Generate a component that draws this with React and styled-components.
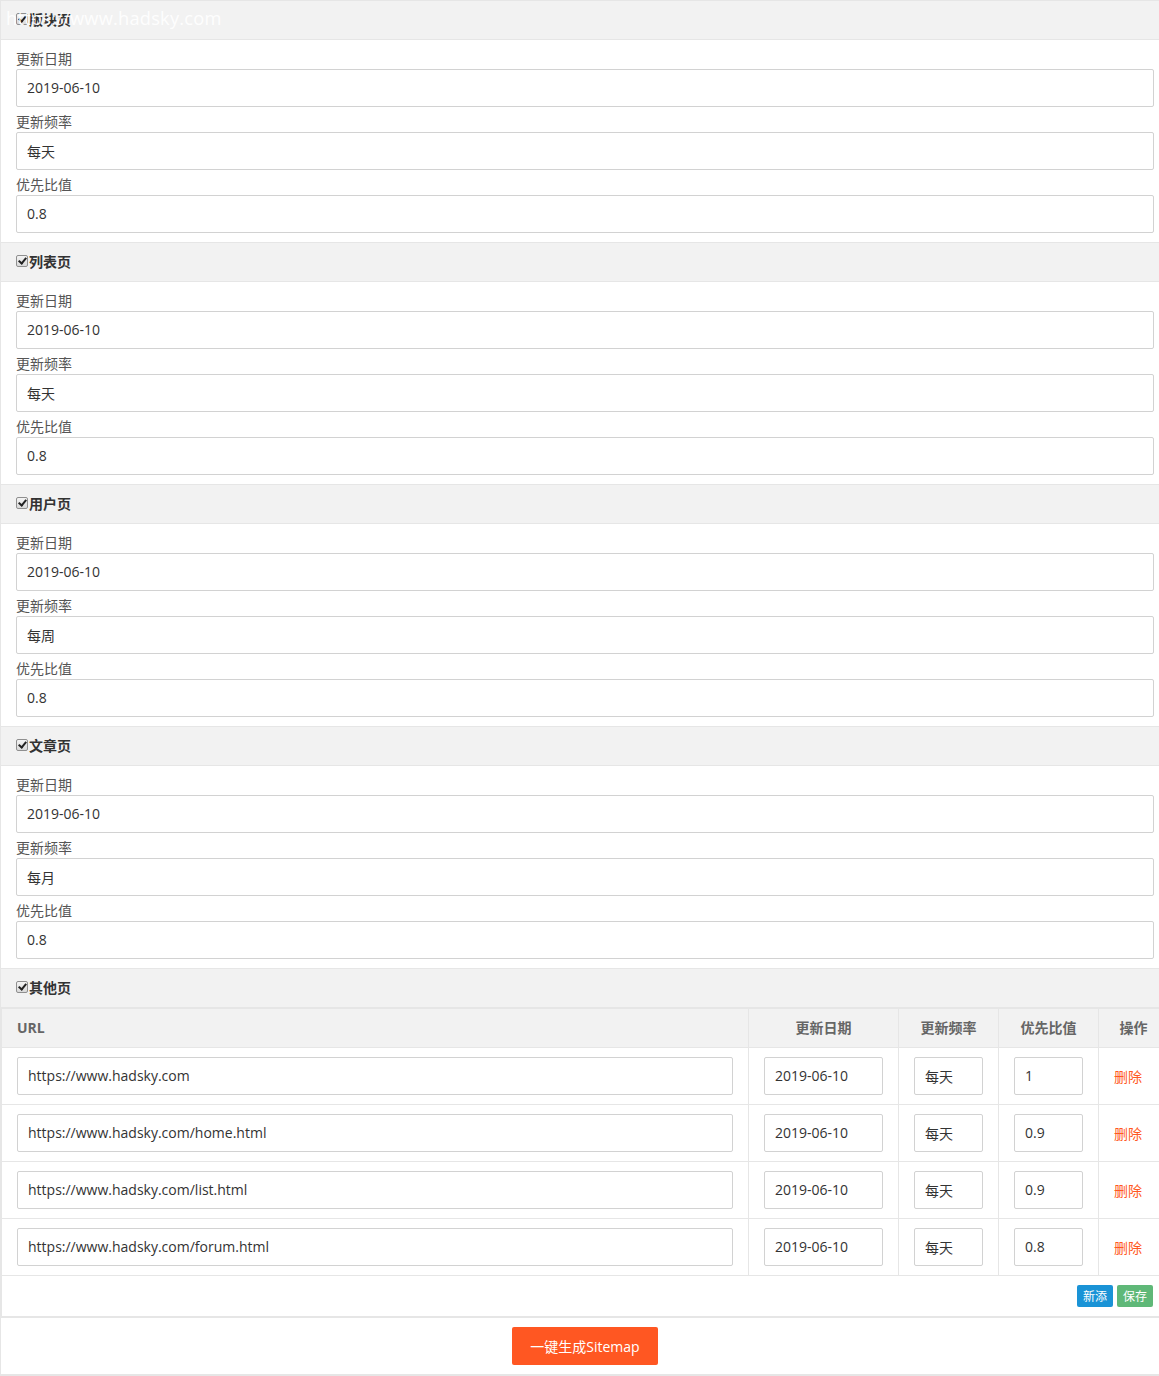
import React from 'react';
import styled, { createGlobalStyle } from 'styled-components';

const GlobalStyle = createGlobalStyle`
  html, body {
    margin: 0;
    padding: 0;
    overflow-x: hidden;
    background: #fff;
  }
  body {
    font-family: "Open Sans", "Noto Sans CJK SC", sans-serif;
    font-size: 14px;
    color: #333;
  }
`;

const Page = styled.div`
  position: relative;
  width: 1170px;
  box-sizing: border-box;
  border-left: 1px solid #e6e6e6;
  border-right: 1px solid #e6e6e6;
`;

const Watermark = styled.div`
  position: absolute;
  left: 5px;
  top: 5px;
  font-size: 18.3px;
  color: rgba(255, 255, 255, 0.92);
  letter-spacing: 0.2px;
  pointer-events: none;
`;

const SectionHead = styled.div`
  display: flex;
  align-items: center;
  box-sizing: border-box;
  height: 40px;
  padding: 0 0 2px 15px;
  background: #f2f2f2;
  border-top: 1px solid #e6e6e6;
  border-bottom: 1px solid #e6e6e6;
  font-weight: bold;
  color: #333;
`;

const Check = styled.input`
  appearance: none;
  -webkit-appearance: none;
  position: relative;
  box-sizing: border-box;
  width: 12px;
  height: 12px;
  margin: 0 1px 1px 0;
  border: 1px solid #8f8f8f;
  border-radius: 2px;
  background: linear-gradient(#f4f4f4, #d9d9d9);
  &::after {
    content: '';
    position: absolute;
    left: 3px;
    top: 0px;
    width: 3px;
    height: 6px;
    border: solid #222;
    border-width: 0 2px 2px 0;
    transform: rotate(40deg);
  }
`;

const SectionBody = styled.div`
  padding: 4px 15px 9px;
`;

const Label = styled.div`
  height: 20px;
  line-height: 19px;
  margin-top: 5px;
  color: #555;
`;

const Input = styled.input`
  display: block;
  box-sizing: border-box;
  width: 100%;
  height: 38px;
  padding: 0 10px 1px;
  border: 1px solid #d2d2d2;
  border-radius: 2px;
  font-family: inherit;
  font-size: 14px;
  color: #333;
  background: #fff;
  outline: none;
`;

const Table = styled.table`
  width: 100%;
  table-layout: fixed;
  border-collapse: collapse;
  border: 1px solid #e6e6e6;
`;

const Th = styled.th`
  box-sizing: border-box;
  height: 39px;
  padding: 0 ${({ $pr }) => ($pr != null ? $pr : 15)}px 0 ${({ $pl }) => ($pl != null ? $pl : 15)}px;
  line-height: 36px;
  background: #f2f2f2;
  border: 1px solid #e6e6e6;
  font-weight: bold;
  color: #666;
  text-align: ${({ $align }) => $align || 'center'};
`;

const Td = styled.td`
  height: 38px;
  padding: 9px 15px;
  border: 1px solid #e6e6e6;
  vertical-align: middle;
`;

const DelLink = styled.span`
  color: #ff5722;
  cursor: pointer;
`;

const FootCell = styled.td`
  padding: 9px 15px 9px 0;
  height: 22px;
  text-align: right;
  border: 1px solid #e6e6e6;
`;

const SmallBtn = styled.button`
  height: 22px;
  padding: 0 6px;
  margin-left: 4px;
  border: none;
  border-radius: 2px;
  font-family: inherit;
  font-size: 12px;
  color: #fff;
  background: ${({ $bg }) => $bg};
  cursor: pointer;
  vertical-align: top;
`;

const BottomBar = styled.div`
  display: flex;
  justify-content: center;
  padding: 9px 0;
  border-top: 1px solid #e6e6e6;
  border-bottom: 2px solid #e6e6e6;
`;

const MainBtn = styled.button`
  height: 38px;
  padding: 0 18px 1px;
  border: none;
  border-radius: 2px;
  background: #ff5722;
  color: #fff;
  font-family: inherit;
  font-size: 14px;
  cursor: pointer;
`;

const sections = [
  { title: '版块页', freq: '每天' },
  { title: '列表页', freq: '每天' },
  { title: '用户页', freq: '每周' },
  { title: '文章页', freq: '每月' },
];

const others = [
  { url: 'https://www.hadsky.com', pri: '1' },
  { url: 'https://www.hadsky.com/home.html', pri: '0.9' },
  { url: 'https://www.hadsky.com/list.html', pri: '0.9' },
  { url: 'https://www.hadsky.com/forum.html', pri: '0.8' },
];

const Field = ({ label, value }) => (
  <>
    <Label>{label}</Label>
    <Input defaultValue={value} />
  </>
);

export default function App() {
  return (
    <Page>
      <GlobalStyle />
      {sections.map((s) => (
        <div key={s.title}>
          <SectionHead>
            <Check type="checkbox" defaultChecked />
            {s.title}
          </SectionHead>
          <SectionBody>
            <Field label="更新日期" value="2019-06-10" />
            <Field label="更新频率" value={s.freq} />
            <Field label="优先比值" value="0.8" />
          </SectionBody>
        </div>
      ))}
      <SectionHead>
        <Check type="checkbox" defaultChecked />
        其他页
      </SectionHead>
      <Table>
        <colgroup>
          <col />
          <col style={{ width: 150 }} />
          <col style={{ width: 100 }} />
          <col style={{ width: 100 }} />
          <col style={{ width: 70 }} />
        </colgroup>
        <thead>
          <tr>
            <Th $align="left">URL</Th>
            <Th>更新日期</Th>
            <Th>更新频率</Th>
            <Th>优先比值</Th>
            <Th $pl={0} $pr={0}>操作</Th>
          </tr>
        </thead>
        <tbody>
          {others.map((o) => (
            <tr key={o.url}>
              <Td><Input defaultValue={o.url} /></Td>
              <Td><Input defaultValue="2019-06-10" /></Td>
              <Td><Input defaultValue="每天" /></Td>
              <Td><Input defaultValue={o.pri} /></Td>
              <Td><DelLink>删除</DelLink></Td>
            </tr>
          ))}
          <tr>
            <FootCell colSpan={5}>
              <SmallBtn $bg="#1a93d6">新添</SmallBtn>
              <SmallBtn $bg="#5fb878">保存</SmallBtn>
            </FootCell>
          </tr>
        </tbody>
      </Table>
      <BottomBar>
        <MainBtn>一键生成Sitemap</MainBtn>
      </BottomBar>
      <Watermark>https://www.hadsky.com</Watermark>
    </Page>
  );
}
